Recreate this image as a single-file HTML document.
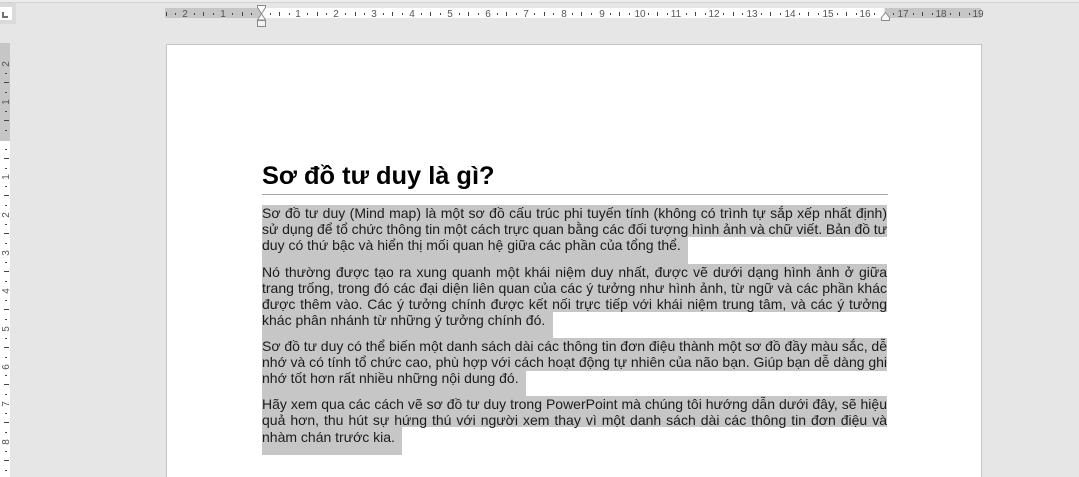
<!DOCTYPE html>
<html><head><meta charset="utf-8">
<style>
html,body{margin:0;padding:0;width:1079px;height:477px;overflow:hidden;background:#e6e6e6;font-family:"Liberation Sans",Arial,sans-serif}
#w{position:relative;width:1079px;height:477px;overflow:hidden;background:#e6e6e6}
.a{position:absolute}
.sel{position:absolute;background:#c6c6c6}
.l{position:absolute;left:262px;width:625px;height:16px;line-height:16px;font-size:14px;color:#1c1c1c;text-align:justify;text-align-last:justify;white-space:normal;overflow:hidden;word-spacing:-1.5px}
.e{text-align-last:left;white-space:nowrap;word-spacing:0}
</style></head><body><div id="w">
<div class="a" style="left:0;top:0;width:1079px;height:2px;background:#ececec"></div>
<div class="a" style="left:0;top:2px;width:1079px;height:1px;background:#d2d2d2"></div>
<div class="a" style="left:0;top:3px;width:16px;height:21px;background:#dadada"></div>
<div class="a" style="left:0;top:7px;width:12px;height:13px;background:#fff"></div>
<div class="a" style="left:2px;top:12px;width:2px;height:6px;background:#707070"></div>
<div class="a" style="left:2px;top:16px;width:6px;height:2px;background:#707070"></div>

<svg class="a" style="left:0;top:0" width="1079" height="477" viewBox="0 0 1079 477">
<rect x="165" y="8" width="96" height="10" fill="#c6c6c6"/>
<rect x="261" y="8" width="623" height="10" fill="#fff"/>
<rect x="885" y="8" width="96" height="10" fill="#c6c6c6"/>
<rect x="0" y="43" width="10" height="98" fill="#c6c6c6"/>
<rect x="0" y="141" width="10" height="336" fill="#fff"/>
<!-- horizontal dots -->
<path fill="none" stroke="#444" stroke-width="1" shape-rendering="crispEdges" d="M175.5 13v2M194.5 13v2M213.5 13v2M232.5 13v2M251.5 13v2M270.5 13v2M289.5 13v2M307.5 13v2M326.5 13v2M345.5 13v2M364.5 13v2M383.5 13v2M402.5 13v2M421.5 13v2M440.5 13v2M459.5 13v2M478.5 13v2M497.5 13v2M516.5 13v2M534.5 13v2M553.5 13v2M572.5 13v2M591.5 13v2M610.5 13v2M629.5 13v2M648.5 13v2M667.5 13v2M686.5 13v2M705.5 13v2M723.5 13v2M742.5 13v2M761.5 13v2M780.5 13v2M799.5 13v2M818.5 13v2M837.5 13v2M856.5 13v2M874.5 13v2M893.5 13v2M913.5 13v2M932.5 13v2M950.5 13v2M969.5 13v2"/>
<!-- horizontal lines -->
<path fill="none" stroke="#444" stroke-width="1" shape-rendering="crispEdges" d="M166.5 12v4M203.5 12v4M242.5 12v4M279.5 12v4M317.5 12v4M355.5 12v4M392.5 12v4M430.5 12v4M468.5 12v4M506.5 12v4M544.5 12v4M581.5 12v4M619.5 12v4M657.5 12v4M695.5 12v4M733.5 12v4M770.5 12v4M808.5 12v4M846.5 12v4M922.5 12v4M959.5 12v4"/>
<!-- vertical dots -->
<path fill="none" stroke="#444" stroke-width="1" shape-rendering="crispEdges" d="M5 73.5h2M5 92.5h2M5 111.5h2M5 130.5h2M5 149.5h2M5 168.5h2M5 186.5h2M5 205.5h2M5 224.5h2M5 243.5h2M5 262.5h2M5 281.5h2M5 300.5h2M5 319.5h2M5 338.5h2M5 357.5h2M5 375.5h2M5 394.5h2M5 413.5h2M5 432.5h2M5 451.5h2M5 470.5h2"/>
<!-- vertical lines -->
<path fill="none" stroke="#444" stroke-width="1" shape-rendering="crispEdges" d="M4 82.5h5M4 120.5h5M4 158.5h5M4 195.5h5M4 233.5h5M4 271.5h5M4 309.5h5M4 347.5h5M4 384.5h5M4 422.5h5M4 460.5h5"/>
<g font-family="Liberation Sans" font-size="10" fill="#555" text-anchor="middle">
<text x="185" y="17">2</text><text x="223" y="17">1</text>
<text x="298" y="17">1</text><text x="336" y="17">2</text><text x="374" y="17">3</text><text x="412" y="17">4</text><text x="450" y="17">5</text><text x="488" y="17">6</text><text x="526" y="17">7</text><text x="564" y="17">8</text><text x="602" y="17">9</text><text x="640" y="17">10</text><text x="676" y="17">11</text><text x="714" y="17">12</text><text x="752" y="17">13</text><text x="790" y="17">14</text><text x="828" y="17">15</text><text x="865" y="17">16</text><text x="903" y="17">17</text><text x="941" y="17">18</text><text x="978" y="17">19</text>
</g>
<g font-family="Liberation Sans" font-size="10" fill="#555" text-anchor="middle">
<text transform="translate(9 64) rotate(-90)">2</text><text transform="translate(9 102) rotate(-90)">1</text>
<text transform="translate(9 177) rotate(-90)">1</text><text transform="translate(9 215) rotate(-90)">2</text><text transform="translate(9 253) rotate(-90)">3</text><text transform="translate(9 291) rotate(-90)">4</text><text transform="translate(9 329) rotate(-90)">5</text><text transform="translate(9 367) rotate(-90)">6</text><text transform="translate(9 404) rotate(-90)">7</text><text transform="translate(9 442) rotate(-90)">8</text>
</g>
<path d="M257.5 5.5h8v2l-8 12.5h8l-8-12.5z" fill="#fff" stroke="#8a8a8a"/>
<rect x="257.5" y="20.5" width="8" height="6" fill="#f2f2f2" stroke="#8a8a8a"/>
<path d="M881.5 20.5v-3l4-5 4 5v3z" fill="#f8f8f8" stroke="#8a8a8a"/>
</svg>

<div class="a" style="left:166px;top:44px;width:814px;height:440px;background:#fff;border:1px solid #c6c6c6"></div>

<div class="a" style="left:262px;top:160px;font-size:25.4px;line-height:32px;font-weight:bold;color:#000;white-space:nowrap">Sơ đồ tư duy là gì?</div>
<div class="a" style="left:262px;top:194px;width:626px;height:1px;background:#a2a9b1"></div>

<div class="sel" style="left:262px;top:205px;width:625px;height:32px"></div>
<div class="sel" style="left:262px;top:237px;width:426px;height:27px"></div>
<div class="sel" style="left:262px;top:264px;width:625px;height:48px"></div>
<div class="sel" style="left:262px;top:312px;width:291px;height:26px"></div>
<div class="sel" style="left:262px;top:338px;width:625px;height:33px"></div>
<div class="sel" style="left:262px;top:371px;width:264px;height:25px"></div>
<div class="sel" style="left:262px;top:396px;width:625px;height:31px"></div>
<div class="sel" style="left:262px;top:427px;width:140px;height:28px"></div>

<div class="l" style="top:205px">Sơ đồ tư duy (Mind map) là một sơ đồ cấu trúc phi tuyến tính (không có trình tự sắp xếp nhất định)</div>
<div class="l" style="top:221px">sử dụng để tổ chức thông tin một cách trực quan bằng các đối tượng hình ảnh và chữ viết. Bản đồ tư</div>
<div class="l e" style="top:237px">duy có thứ bậc và hiển thị mối quan hệ giữa các phần của tổng thể.</div>
<div class="l" style="top:264px">Nó thường được tạo ra xung quanh một khái niệm duy nhất, được vẽ dưới dạng hình ảnh ở giữa</div>
<div class="l" style="top:280px">trang trống, trong đó các đại diện liên quan của các ý tưởng như hình ảnh, từ ngữ và các phần khác</div>
<div class="l" style="top:296px">được thêm vào. Các ý tưởng chính được kết nối trực tiếp với khái niệm trung tâm, và các ý tưởng</div>
<div class="l e" style="top:312px">khác phân nhánh từ những ý tưởng chính đó.</div>
<div class="l" style="top:338px">Sơ đồ tư duy có thể biến một danh sách dài các thông tin đơn điệu thành một sơ đồ đầy màu sắc, dễ</div>
<div class="l" style="top:354px">nhớ và có tính tổ chức cao, phù hợp với cách hoạt động tự nhiên của não bạn. Giúp bạn dễ dàng ghi</div>
<div class="l e" style="top:370px">nhớ tốt hơn rất nhiều những nội dung đó.</div>
<div class="l" style="top:396px">Hãy xem qua các cách vẽ sơ đồ tư duy trong PowerPoint mà chúng tôi hướng dẫn dưới đây, sẽ hiệu</div>
<div class="l" style="top:412px">quả hơn, thu hút sự hứng thú với người xem thay vì một danh sách dài các thông tin đơn điệu và</div>
<div class="l e" style="top:429px">nhàm chán trước kia.</div>
</div></body></html>
